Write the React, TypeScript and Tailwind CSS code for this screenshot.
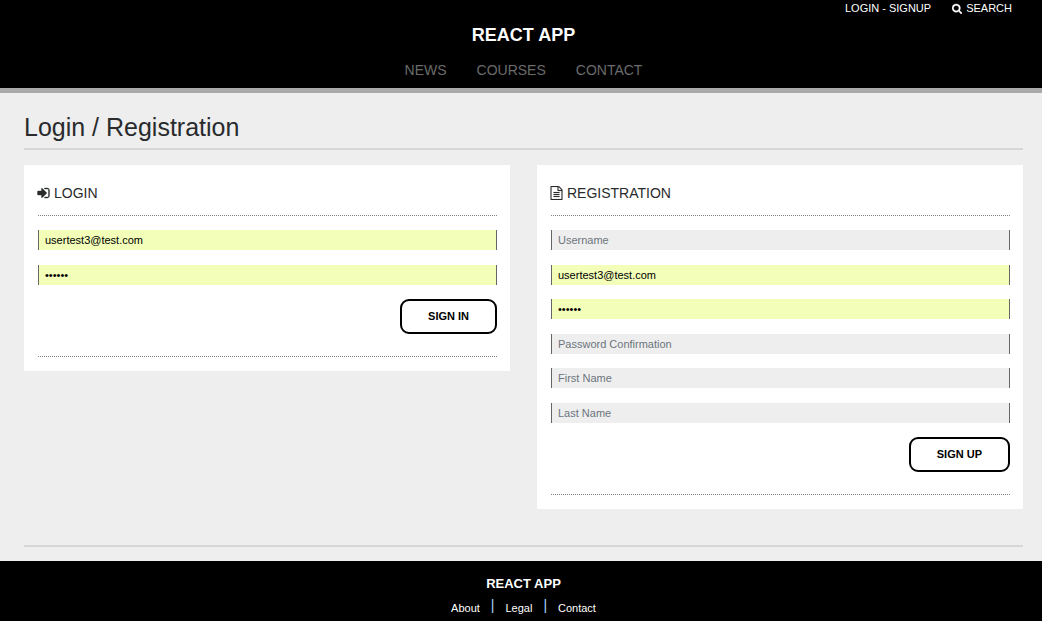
import React from "react";

const ICONS = {
  search:
    "M1216 832q0-185-131.5-316.5t-316.5-131.5-316.5 131.5-131.5 316.5 131.5 316.5 316.5 131.5 316.5-131.5 131.5-316.5zm512 832q0 52-38 90t-90 38q-54 0-90-38l-343-342q-179 124-399 124-143 0-273.5-55.5t-225-150-150-225-55.5-273.5 55.5-273.5 150-225 225-150 273.5-55.5 273.5 55.5 225 150 150 225 55.5 273.5q0 220-124 399l343 343q37 37 37 90z",
  signIn:
    "M1312 896q0 26-19 45l-544 544q-19 19-45 19t-45-19-19-45v-288h-448q-26 0-45-19t-19-45v-384q0-26 19-45t45-19h448v-288q0-26 19-45t45-19 45 19l544 544q19 19 19 45zm352-352v704q0 119-84.5 203.5t-203.5 84.5h-320q-13 0-22.5-9.5t-9.5-22.5q0-4-1-20t-.5-26.5 3-23.5 10-19.5 20.5-6.5h320q66 0 113-47t47-113v-704q0-66-47-113t-113-47h-312l-11.5-1-11.5-3-8-5.5-7-9-2-13.5q0-4-1-20t-.5-26.5 3-23.5 10-19.5 20.5-6.5h320q119 0 203.5 84.5t84.5 203.5z",
  file:
    "M1596 380q28 28 48 76t20 88v1152q0 40-28 68t-68 28h-1344q-40 0-68-28t-28-68v-1600q0-40 28-68t68-28h896q40 0 88 20t76 48zm-444-244v376h376q-10-29-22-41l-313-313q-12-12-41-22zm384 1528v-1024h-416q-40 0-68-28t-28-68v-416h-768v1536h1280zm-1024-864q0-14 9-23t23-9h704q14 0 23 9t9 23v64q0 14-9 23t-23 9h-704q-14 0-23-9t-9-23v-64zm736 224q14 0 23 9t9 23v64q0 14-9 23t-23 9h-704q-14 0-23-9t-9-23v-64q0-14 9-23t23-9h704zm0 256q14 0 23 9t9 23v64q0 14-9 23t-23 9h-704q-14 0-23-9t-9-23v-64q0-14 9-23t23-9h704z",
};

function Icon({ name, className }: { name: keyof typeof ICONS; className: string }) {
  return (
    <svg
      viewBox="64 0 1664 1792"
      fill="currentColor"
      stroke="currentColor"
      strokeWidth={name === "file" ? 16 : 48}
      aria-hidden="true"
      className={className}
    >
      <path d={ICONS[name]} />
    </svg>
  );
}

type FieldProps = {
  label: string;
  type?: string;
  value?: string;
};

function Field({ label, type = "text", value = "" }: FieldProps) {
  const fill = value ? "bg-[#f3ffb9]" : "bg-[#eee]";
  return (
    <input
      type={type}
      aria-label={label}
      placeholder={label}
      defaultValue={value}
      className={`h-5 w-full border-x border-[#666] px-[6px] text-[11px] leading-4 text-black outline-none placeholder:text-[#6c757d] ${fill}`}
    />
  );
}

type PanelProps = {
  icon: keyof typeof ICONS;
  title: string;
  action: string;
  children: React.ReactNode;
};

function Panel({ icon, title, action, children }: PanelProps) {
  return (
    <section className="bg-white pt-[18px] pr-[13px] pb-[14px] pl-[14px]">
      <h2 className="-ml-px flex items-center gap-1 text-[14px] leading-5 text-[#292b2c]">
        <Icon name={icon} className="h-[14px] w-[13px]" />
        {title}
      </h2>
      <form
        onSubmit={(e) => e.preventDefault()}
        className="mt-3 border-y border-dotted border-[#808080] pt-[14px] pb-[22px]"
      >
        {children}
        <div className="mt-[14px] flex justify-end">
          <button
            type="submit"
            className="h-[35px] rounded-[9px] border-2 border-black bg-white px-[26px] text-[11px] font-bold text-black"
          >
            {action}
          </button>
        </div>
      </form>
    </section>
  );
}

export default function App() {
  return (
    <div className="bg-white font-['Liberation_Sans',Arial,sans-serif]">
      <header className="border-b-[5px] border-[#aaa] bg-black pr-[19px] pl-6">
        <div className="flex h-4 items-center justify-end gap-[21px] pr-[11px] text-[11px] text-white">
          <a href="#login">LOGIN - SIGNUP</a>
          <a href="#search" className="flex items-center gap-1">
            <Icon name="search" className="h-[11px] w-[10px]" />
            SEARCH
          </a>
        </div>
        <h1 className="pt-[7px] text-center text-[18px] leading-6 font-bold text-white">REACT APP</h1>
        <nav className="flex justify-center gap-[30px] pt-[13px] pb-2 text-[14px] leading-5 text-[#6b6b6b]">
          <a href="#news">NEWS</a>
          <a href="#courses">COURSES</a>
          <a href="#contact">CONTACT</a>
        </nav>
      </header>

      <main className="bg-[#eee] pt-[19px] pr-[19px] pb-[14px] pl-6">
        <h1 className="border-b-2 border-[#d6d6d6] pb-[6px] text-[25px] leading-[30px] text-[#292b2c]">
          Login / Registration
        </h1>
        <div className="mt-[15px] grid grid-cols-2 items-start gap-[27px] border-b-2 border-[#d6d6d6] pb-9">
          <Panel icon="signIn" title="LOGIN" action="SIGN IN">
            <div className="flex flex-col gap-[15px]">
              <Field label="Email" type="email" value="usertest3@test.com" />
              <Field label="Password" type="password" value="secret" />
            </div>
          </Panel>
          <Panel icon="file" title="REGISTRATION" action="SIGN UP">
            <div className="flex min-h-[193px] flex-col justify-between">
              <Field label="Username" />
              <Field label="Email" type="email" value="usertest3@test.com" />
              <Field label="Password" type="password" value="secret" />
              <Field label="Password Confirmation" type="password" />
              <Field label="First Name" />
              <Field label="Last Name" />
            </div>
          </Panel>
        </div>
      </main>

      <footer className="bg-black pt-[14px] pr-[19px] pb-[5px] pl-6 text-white">
        <p className="text-center text-[13px] leading-[18px] font-bold">REACT APP</p>
        <ul className="flex items-end justify-center gap-[11px] pt-[7px] text-[11px] leading-4">
          <li>
            <a href="#about">About</a>
          </li>
          <li aria-hidden="true" className="self-start text-[14px] leading-[10px] text-[#a8d8ff]">|</li>
          <li>
            <a href="#legal">Legal</a>
          </li>
          <li aria-hidden="true" className="self-start text-[14px] leading-[10px] text-[#a8d8ff]">|</li>
          <li>
            <a href="#contact-us">Contact</a>
          </li>
        </ul>
      </footer>
    </div>
  );
}
